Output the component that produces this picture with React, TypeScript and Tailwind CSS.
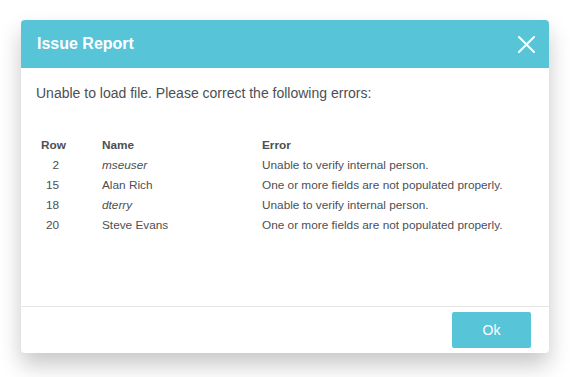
import React from 'react';

interface IssueRow {
  row: number;
  name: string;
  internal: boolean;
  error: string;
}

const issues: IssueRow[] = [
  { row: 2, name: 'mseuser', internal: true, error: 'Unable to verify internal person.' },
  { row: 15, name: 'Alan Rich', internal: false, error: 'One or more fields are not populated properly.' },
  { row: 18, name: 'dterry', internal: true, error: 'Unable to verify internal person.' },
  { row: 20, name: 'Steve Evans', internal: false, error: 'One or more fields are not populated properly.' },
];

function CloseIcon() {
  return (
    <svg width="17" height="17" viewBox="0 0 17 17" fill="none">
      <path d="M1 1L16 16M16 1L1 16" stroke="white" strokeWidth="2" strokeLinecap="square" />
    </svg>
  );
}

export default function App() {
  return (
    <div
      className="w-[570px] h-[377px] bg-white pl-[21px] pt-[20px]"
      style={{ fontFamily: '"Liberation Sans", Arial, sans-serif' }}
    >
      <div className="w-[528px] bg-white rounded-[4px] shadow-[0_12px_22px_rgba(0,0,0,0.22)] flex flex-col">
        <div className="h-[48px] bg-[#58c4d8] rounded-t-[4px] flex items-center justify-between pl-[16px] pr-[14px]">
          <h1 className="text-white font-bold text-[16px]">Issue Report</h1>
          <button className="w-[17px] h-[17px] flex items-center justify-center">
            <CloseIcon />
          </button>
        </div>

        <div className="h-[238px] pl-[15px] pt-[15px] text-[#4b4f54]">
          <p className="text-[14px] leading-[20px]">
            Unable to load file. Please correct the following errors:
          </p>
          <div className="mt-[32px] ml-[5px] grid grid-cols-[61px_160px_1fr] text-[11.8px] leading-[20px]">
            <div className="font-bold">Row</div>
            <div className="font-bold">Name</div>
            <div className="font-bold">Error</div>
            {issues.map((it) => (
              <React.Fragment key={it.row}>
                <div className="w-[18px] text-right">{it.row}</div>
                <div className={it.internal ? 'italic' : ''}>{it.name}</div>
                <div>{it.error}</div>
              </React.Fragment>
            ))}
          </div>
        </div>

        <div className="h-[47px] border-t border-[#e6e6e6] flex items-center justify-end pr-[18px]">
          <button className="w-[79px] h-[36px] bg-[#58c4d8] rounded-[2px] text-white text-[14px]">
            Ok
          </button>
        </div>
      </div>
    </div>
  );
}
